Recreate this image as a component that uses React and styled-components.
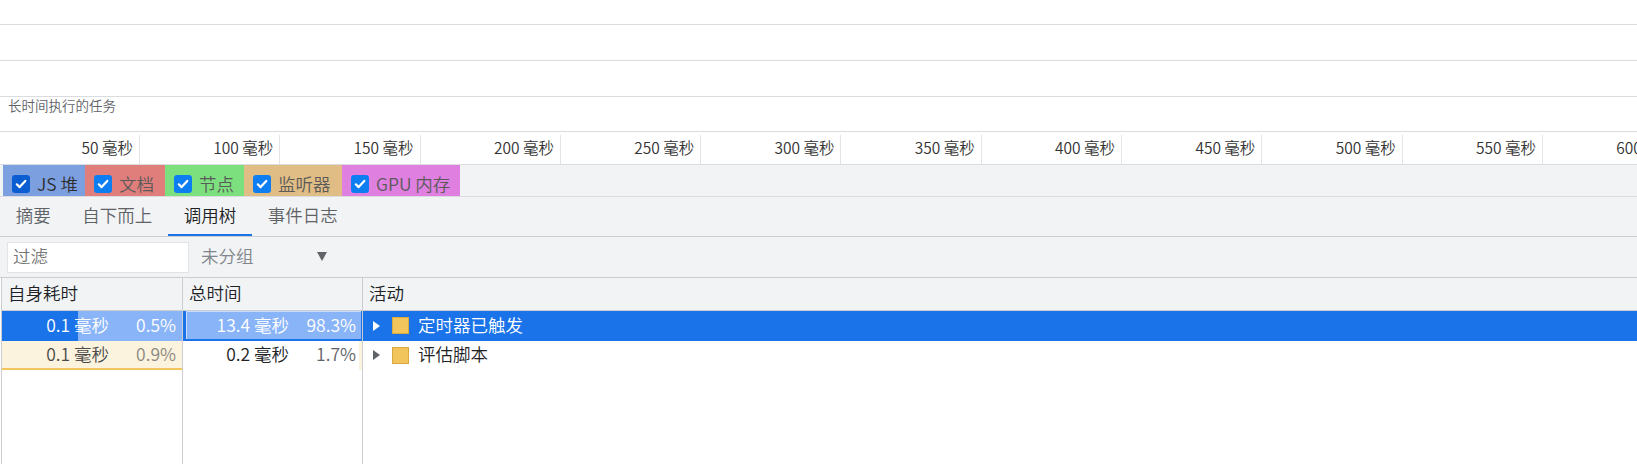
import React from 'react';
import styled, { createGlobalStyle } from 'styled-components';

const Global = createGlobalStyle`
  *, *::before, *::after { box-sizing: border-box; }
  html, body { margin: 0; padding: 0; background: #fff; }
  body { overflow: hidden; font-family: "Noto Sans CJK SC", "Noto Sans", sans-serif; }
  #root { height: 464px; }
`;

const Page = styled.div`
  height: 464px;
  display: flex;
  flex-direction: column;
  overflow: hidden;
  background: #fff;
  color: #202124;
  font-family: "Noto Sans CJK SC", "Noto Sans", sans-serif;
  font-weight: 350;
`;

const Track = styled.div`
  flex: 0 0 ${p => p.$h}px;
  border-bottom: 1px solid #dadce0;
  background: #fff;
  padding: 0 8px;
`;

const TrackLabel = styled.div`
  font-size: 13.5px;
  line-height: 16px;
  color: #5f6368;
`;

const Ruler = styled.div`
  flex: 0 0 33px;
  display: flex;
  padding-top: 3px;
  overflow: hidden;
  background: #fff;
  border-bottom: 1px solid #dadce0;
`;

const Tick = styled.div`
  flex: 0 0 ${p => p.$w}px;
  display: flex;
  align-items: center;
  justify-content: flex-end;
  padding: 0 6px 5px 0;
  border-right: 1px solid #e3e4e6;
  font-size: 15.5px;
  line-height: 18px;
  color: #333;
  white-space: nowrap;
`;

const Legend = styled.div`
  flex: 0 0 32px;
  display: flex;
  padding-left: 3px;
  background: #f1f3f4;
  border-bottom: 1px solid #dadce0;
`;

const LegendItem = styled.div`
  flex: 0 0 ${p => p.$w}px;
  display: flex;
  align-items: center;
  gap: 7px;
  padding: 9px 0 2px 9px;
  background: ${p => p.$bg};
  color: ${p => p.$fg};
  font-size: 17.5px;
  line-height: 20px;
  white-space: nowrap;
  overflow: hidden;
`;

const CheckBox = styled.span`
  flex: 0 0 18px;
  width: 18px;
  height: 18px;
  border-radius: 3px;
  background: ${p => p.$c};
  display: flex;
  align-items: center;
  justify-content: center;
`;

const Tabs = styled.div`
  flex: 0 0 40px;
  display: flex;
  background: #f1f3f4;
  border-bottom: 1px solid #cbcdd1;
`;

const Tab = styled.div`
  display: flex;
  align-items: center;
  padding: 0 15.75px 2px;
  font-size: 17.5px;
  line-height: 20px;
  color: ${p => (p.$active ? '#202124' : '#5f6368')};
  border-bottom: 2px solid ${p => (p.$active ? '#1a73e8' : 'transparent')};
  white-space: nowrap;
`;

const Toolbar = styled.div`
  flex: 0 0 41px;
  display: flex;
  align-items: center;
  padding: 0 7px;
  background: #f1f3f4;
  border-bottom: 1px solid #cbcdd1;
`;

const FilterBox = styled.div`
  width: 182px;
  height: 31px;
  display: flex;
  align-items: center;
  padding: 0 0 3px 5px;
  background: #fff;
  border: 1px solid #e1e3e6;
  color: #757575;
  font-size: 17.5px;
  line-height: 20px;
`;

const Select = styled.div`
  width: 126px;
  margin-left: 12px;
  display: flex;
  align-items: center;
  justify-content: space-between;
  color: #80868b;
  font-size: 17.5px;
  line-height: 20px;
  padding-bottom: 3px;
`;

const Caret = styled.span`
  width: 0;
  height: 0;
  border-left: 5px solid transparent;
  border-right: 5px solid transparent;
  border-top: 9px solid #5f6368;
  margin-top: 1px;
`;

const Grid = styled.div`
  flex: 1;
  display: flex;
  flex-direction: column;
  margin-left: 1px;
  border-left: 1px solid #cacdd1;
  background: #fff;
`;

const Row = styled.div`
  display: grid;
  grid-template-columns: 181px 180px 1fr;
  flex: ${p => (p.$fill ? '1' : `0 0 ${p.$h}px`)};
  background: ${p => p.$bg || 'transparent'};
`;

const HeadRow = styled(Row)`
  background: #f1f3f4;
  border-bottom: 1px solid #cacdd1;
`;

const HeadCell = styled.div`
  display: flex;
  align-items: center;
  padding: 0 7px 2px 6px;
  border-right: ${p => (p.$last ? 'none' : '1px solid #cacdd1')};
  font-size: 17.5px;
  line-height: 20px;
  color: #202124;
`;

const Cell = styled.div`
  display: flex;
  align-items: center;
  padding-bottom: 3px;
  border-right: ${p => (p.$last ? 'none' : '1px solid #cacdd1')};
  font-size: 17.5px;
  line-height: 20px;
  white-space: nowrap;
  overflow: hidden;
`;

const NumCell = styled(Cell)`
  justify-content: flex-end;
  padding-right: 6px;
  background: ${p => p.$bg || 'transparent'};
  box-shadow: ${p => p.$shadow || 'none'};
  color: ${p => p.$fg || '#202124'};
`;

const Pct = styled.span`
  width: 67px;
  text-align: right;
  color: ${p => p.$fg || 'inherit'};
`;

const ActCell = styled(Cell)`
  padding-left: 9.5px;
  padding-bottom: 1px;
  color: ${p => p.$fg};
`;

const ActText = styled.span`
  padding-bottom: 2px;
`;

const Expander = styled.span`
  width: 0;
  height: 0;
  border-top: 5px solid transparent;
  border-bottom: 5px solid transparent;
  border-left: 7px solid ${p => p.$c};
  margin-right: 12.5px;
`;

const Swatch = styled.span`
  width: 17px;
  height: 17px;
  background: #f2c55c;
  border: 1px solid #d9a93e;
  margin-right: 9px;
`;

const ticks = Array.from({ length: 12 }, (_, i) => (i + 1) * 50);

const legend = [
  { label: 'JS 堆', w: 82, bg: '#7c9fe0', fg: '#2e2e2e', box: '#0b5ed1' },
  { label: '文档', w: 80, bg: '#e07e7b', fg: '#5a5a5a', box: '#0d7ef2' },
  { label: '节点', w: 79, bg: '#7de07e', fg: '#5a5a5a', box: '#0d7ef2' },
  { label: '监听器', w: 98, bg: '#e0bd85', fg: '#5a5a5a', box: '#0d7ef2' },
  { label: 'GPU 内存', w: 118, bg: '#df7fdf', fg: '#5a5a5a', box: '#0d7ef2' },
];

const tabs = ['摘要', '自下而上', '调用树', '事件日志'];

const Check = () => (
  <svg width="12" height="12" viewBox="0 0 12 12">
    <path d="M1.8 6.3 L4.6 9.1 L10.3 2.9" fill="none" stroke="#fff" strokeWidth="2.2" strokeLinecap="round" strokeLinejoin="round" />
  </svg>
);

export default function App() {
  return (
    <Page>
      <Global />
      <Track $h={25} />
      <Track $h={36} />
      <Track $h={36} />
      <Track $h={35}>
        <TrackLabel>长时间执行的任务</TrackLabel>
      </Track>
      <Ruler>
        {ticks.map((t, i) => (
          <Tick key={t} $w={i === 0 ? 140 : 140.3}>{t} 毫秒</Tick>
        ))}
      </Ruler>
      <Legend>
        {legend.map(l => (
          <LegendItem key={l.label} $w={l.w} $bg={l.bg} $fg={l.fg}>
            <CheckBox $c={l.box}><Check /></CheckBox>
            {l.label}
          </LegendItem>
        ))}
      </Legend>
      <Tabs>
        {tabs.map(t => (
          <Tab key={t} $active={t === '调用树'}>{t}</Tab>
        ))}
      </Tabs>
      <Toolbar>
        <FilterBox>过滤</FilterBox>
        <Select>
          未分组
          <Caret />
        </Select>
      </Toolbar>
      <Grid>
        <HeadRow $h={33}>
          <HeadCell>自身耗时</HeadCell>
          <HeadCell>总时间</HeadCell>
          <HeadCell $last>活动</HeadCell>
        </HeadRow>
        <Row $h={30} $bg="#1a73e8">
          <NumCell $bg="linear-gradient(to right, #1a73e8 76px, #8ab4f8 76px)" $fg="#fff">
            0.1 毫秒<Pct>0.5%</Pct>
          </NumCell>
          <NumCell
            $bg="#8ab4f8"
            $fg="#fff"
            $shadow="inset 3px 0 0 #1a73e8, inset 0 -2px 0 #1a73e8, inset -1px 0 0 #1a73e8, inset 4px 1px 0 #c9dcfb"
          >
            13.4 毫秒<Pct>98.3%</Pct>
          </NumCell>
          <ActCell $last $fg="#fff">
            <Expander $c="#fff" />
            <Swatch />
            <ActText>定时器已触发</ActText>
          </ActCell>
        </Row>
        <Row $h={29}>
          <NumCell $bg="#fcf3de" $fg="#4a4a4a" $shadow="inset 0 -2px 0 #f3c65c">
            0.1 毫秒<Pct $fg="#8a8880">0.9%</Pct>
          </NumCell>
          <NumCell $bg="linear-gradient(to left, #fcf3de 3px, #fff 3px)" $fg="#202124">
            0.2 毫秒<Pct $fg="#5f6368">1.7%</Pct>
          </NumCell>
          <ActCell $last $fg="#202124">
            <Expander $c="#5f6368" />
            <Swatch />
            <ActText>评估脚本</ActText>
          </ActCell>
        </Row>
        <Row $fill>
          <Cell />
          <Cell />
          <Cell $last />
        </Row>
      </Grid>
    </Page>
  );
}
